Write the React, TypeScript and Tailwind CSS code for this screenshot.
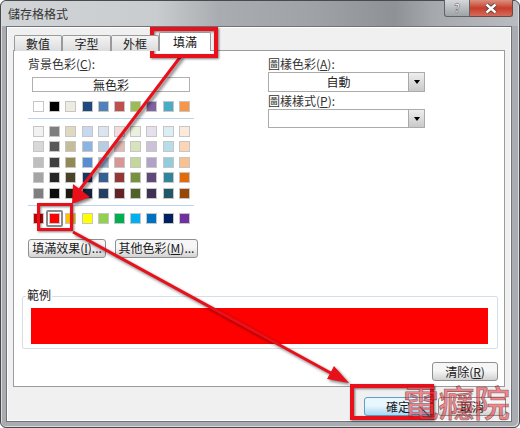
import React from "react";

const basic = ["bg-[#ffffff]","bg-[#000000]","bg-[#eeece1]","bg-[#1f497d]","bg-[#4f81bd]","bg-[#c0504d]","bg-[#9bbb59]","bg-[#8064a2]","bg-[#4bacc6]","bg-[#f79646]"];
const theme = [
  "bg-[#f2f2f2]","bg-[#7f7f7f]","bg-[#ddd9c3]","bg-[#c6d9f0]","bg-[#dbe5f1]","bg-[#f2dcdb]","bg-[#ebf1dd]","bg-[#e5e0ec]","bg-[#dbeef3]","bg-[#fdeada]",
  "bg-[#d8d8d8]","bg-[#595959]","bg-[#c4bd97]","bg-[#8db3e2]","bg-[#b8cce4]","bg-[#e5b9b7]","bg-[#d7e3bc]","bg-[#ccc1d9]","bg-[#b7dde8]","bg-[#fbd5b5]",
  "bg-[#bfbfbf]","bg-[#3f3f3f]","bg-[#938953]","bg-[#548dd4]","bg-[#95b3d7]","bg-[#d99694]","bg-[#c3d69b]","bg-[#b2a2c7]","bg-[#92cddc]","bg-[#fac08f]",
  "bg-[#a5a5a5]","bg-[#262626]","bg-[#494429]","bg-[#17365d]","bg-[#366092]","bg-[#953734]","bg-[#76923c]","bg-[#5f497a]","bg-[#31859b]","bg-[#e36c09]",
  "bg-[#7f7f7f]","bg-[#0c0c0c]","bg-[#1d1b10]","bg-[#0f243e]","bg-[#244061]","bg-[#632423]","bg-[#4f6128]","bg-[#3f3151]","bg-[#205867]","bg-[#974806]",
];
const standard = ["bg-[#c00000]","bg-[#ff0000]","bg-[#ffc000]","bg-[#ffff00]","bg-[#92d050]","bg-[#00b050]","bg-[#00b0f0]","bg-[#0070c0]","bg-[#002060]","bg-[#7030a0]"];

function Swatch({ c, selected }: { c: string; selected?: boolean }) {
  return (
    <div className="relative w-[11px] h-[11px]">
      <div className={`w-[11px] h-[11px] border border-[#c6c6c6] ${c}`} />
      {selected && <div className="absolute -left-[3px] -top-[3px] w-[17px] h-[17px] border-2 border-[#8a8a8a] rounded-[2px]" />}
    </div>
  );
}

function Grid({ items, rowGap, sel }: { items: string[]; rowGap: string; sel?: number }) {
  return (
    <div className={`grid grid-cols-[repeat(10,16.2px)] ${rowGap}`}>
      {items.map((c, i) => <Swatch key={i} c={c} selected={sel === i} />)}
    </div>
  );
}

function Btn({ children, className = "" }: { children: React.ReactNode; className?: string }) {
  return (
    <div className={`h-[19px] flex items-center justify-center rounded-[3px] border border-[#8e8f8f] bg-gradient-to-b from-[#f6f6f6] from-45% to-[#d2d2d2] text-[12px] leading-none text-[#1a1a1a] ${className}`}>
      {children}
    </div>
  );
}

function Select({ text, h }: { text?: string; h: string }) {
  return (
    <div className={`w-[157px] ${h} flex border border-[#ababab] bg-white`}>
      <div className="flex-1 flex items-center justify-center text-[12px] text-[#222] leading-none">{text}</div>
      <div className="w-[16px] flex items-center justify-center border-l border-[#a9a9a9] bg-gradient-to-b from-[#eeeeee] to-[#c9c9c9]">
        <div className="w-0 h-0 border-l-[3.5px] border-r-[3.5px] border-t-[4px] border-l-transparent border-r-transparent border-t-black" />
      </div>
    </div>
  );
}

function Tab({ label, w }: { label: string; w: string }) {
  return (
    <div className={`${w} h-[16px] flex items-center justify-center border border-b-0 border-[#9a9a9a] rounded-t-[2px] bg-gradient-to-b from-[#f4f4f4] to-[#dcdcdc] text-[12px] leading-none text-[#222]`}>
      {label}
    </div>
  );
}

export default function App() {
  return (
    <div className="relative w-[520px] h-[428px] overflow-hidden bg-white font-['Noto_Sans_CJK_TC','Noto_Sans',sans-serif]">
      <div className="h-full flex flex-col rounded-[6px] border border-[#4a4a4a] bg-[#a9adb1] px-[5px] pb-[5px] shadow-[inset_1px_1px_0_#d8dadc,inset_-1px_-1px_0_#d8dadc]">
        <div className="h-[25px] shrink-0 flex justify-between -mx-[4px] -mt-0 pl-[6px] pr-[5px] rounded-t-[5px] bg-[linear-gradient(90deg,#d2d5d7_0%,#c9ccce_30%,#a9adb1_42%,#9fa3a7_60%,#8e9296_76%,#a6aaae_84%,#b9bcc0_100%)]">
          <span className="text-[12px] leading-[26px] text-[#333]">儲存格格式</span>
          <div className="flex h-[17px] -mt-px">
            <div className="w-[26px] flex items-center justify-center rounded-bl-[3px] border border-t-0 border-[#5f6367] bg-gradient-to-b from-[#d5d8da] to-[#9ea3a6] text-[12px] font-bold leading-none text-white [-webkit-text-stroke:0.5px_#555]">?</div>
            <div className="w-[43px] flex items-center justify-center rounded-br-[3px] border border-l-0 border-t-0 border-[#6b4a46] bg-gradient-to-b from-[#d9907f] via-[#c63c2a] to-[#d56a5a]">
              <svg width="14" height="11" viewBox="0 0 14 11" fill="none">
                <path d="M2.5 1.5 L11.5 9.5 M11.5 1.5 L2.5 9.5" stroke="#4a3a38" strokeWidth="4" />
                <path d="M2.5 1.5 L11.5 9.5 M11.5 1.5 L2.5 9.5" stroke="#ffffff" strokeWidth="2.4" />
              </svg>
            </div>
          </div>
        </div>

        <div className="w-[506px] h-[396px] flex flex-col px-[6px] border border-[#6f7478] bg-[#f0f0f0] shadow-[inset_1px_1px_0_#ffffff,inset_-1px_-1px_0_#ffffff]">
          <div className="h-[24px] shrink-0 flex items-end pl-[1px] -mb-px z-10">
            <Tab label="數值" w="w-[48px]" />
            <Tab label="字型" w="w-[49px]" />
            <Tab label="外框" w="w-[48px]" />
            <div className="w-[52px] h-[19px] flex items-center justify-center border border-b-0 border-[#9a9a9a] rounded-t-[2px] bg-white text-[12px] leading-none text-[#111]">填滿</div>
          </div>

          <div className="w-[492px] h-[337px] flex flex-col border border-[#9c9c9c] bg-white">
            <div className="flex h-[238px] pl-[14px]">
              <div className="w-[240px] flex flex-col">
                <div className="h-[26px] pt-[6px] text-[12px] leading-[14px] text-[#333]">背景色彩(<u>C</u>):</div>
                <div className="ml-[4px] w-[158px] h-[15px] flex items-center justify-center border border-[#b0b0b0] text-[12px] leading-none text-[#222]">無色彩</div>
                <div className="ml-[5px] mt-[9px]"><Grid items={basic} rowGap="gap-y-0" /></div>
                <div className="mt-[6px] w-[166px] h-[1px] bg-[#b9d4f3]" />
                <div className="ml-[5px] mt-[7px]"><Grid items={theme} rowGap="gap-y-[4.4px]" /></div>
                <div className="mt-[6px] w-[166px] h-[1px] bg-[#b9d4f3]" />
                <div className="ml-[5px] mt-[7px]"><Grid items={standard} rowGap="gap-y-0" sel={1} /></div>
                <div className="flex gap-[9px] mt-[15px]">
                  <Btn className="w-[78px]">填滿效果(<u>I</u>)...</Btn>
                  <Btn className="w-[83px]">其他色彩(<u>M</u>)...</Btn>
                </div>
              </div>
              <div className="flex flex-col">
                <div className="h-[21px] pt-[6px] text-[12px] leading-[14px] text-[#333]">圖樣色彩(<u>A</u>):</div>
                <Select text="自動" h="h-[20px]" />
                <div className="h-[17px] pt-[2px] text-[12px] leading-[14px] text-[#333]">圖樣樣式(<u>P</u>):</div>
                <Select h="h-[19px]" />
              </div>
            </div>

            <div className="relative ml-[8px] w-[476px] h-[53px] mt-[7px] rounded-[2px] border border-[#d5dfe5] px-[8px] pt-[11px]">
              <span className="absolute left-[3px] -top-[9px] px-[1px] bg-white text-[12px] leading-[14px] text-[#222]">範例</span>
              <div className="w-[457px] h-[36px] bg-[#ff0000]" />
            </div>
          </div>
        </div>
      </div>

      {/* buttons sitting on panel and client area */}
      <Btn className="absolute left-[432px] top-[362px] w-[66px]">清除(<u>R</u>)</Btn>
      <Btn className="absolute left-[364px] top-[397px] w-[68px] !border-[#5f9fc9] !from-[#e8f6fd] !to-[#a8d8f3]">確定</Btn>
      <Btn className="absolute left-[438px] top-[397px] w-[68px]">取消</Btn>

      {/* annotations */}
      <svg className="absolute inset-0 drop-shadow-[2px_2px_1.5px_rgba(0,0,0,0.5)]" width="520" height="428" viewBox="0 0 520 428" fill="none">
        <path d="M181 56 L78 192" stroke="#e8101a" strokeWidth="3" />
        <path d="M72 204 L73 184 L90 197 Z" fill="#e8101a" />
        <path d="M73 232 L338 377" stroke="#e8101a" strokeWidth="3" />
        <path d="M349 383 L327 379 L334 366 Z" fill="#e8101a" />
      </svg>
      <div className="absolute left-[150px] top-[27px] w-[68px] h-[31px] border-[4px] border-[#e8101a] drop-shadow-[1px_1px_1px_rgba(0,0,0,0.5)]" />
      <div className="absolute left-[37px] top-[203px] w-[36px] h-[28px] border-[3px] border-[#e8101a] drop-shadow-[1px_1px_1px_rgba(0,0,0,0.5)]" />
      <div className="absolute left-[350px] top-[384px] w-[84px] h-[36px] border-[4px] border-[#e8101a] drop-shadow-[1px_1px_1px_rgba(0,0,0,0.5)]" />

      {/* pointer under the watermark */}
      <svg className="absolute left-[419px] top-[406px]" width="14" height="14" viewBox="0 0 14 14" fill="none">
        <path d="M1 1 L12 12 M12 12 L12 6 M12 12 L6 12" stroke="#444" strokeWidth="1.2" />
      </svg>

      <div className="absolute left-[403px] top-[379px] text-[36px] leading-[44px] font-medium tracking-[-0.5px] whitespace-nowrap text-[#e8404a]/60 [-webkit-text-stroke:0.6px_rgba(70,30,30,0.6)]">電癮院</div>
    </div>
  );
}
